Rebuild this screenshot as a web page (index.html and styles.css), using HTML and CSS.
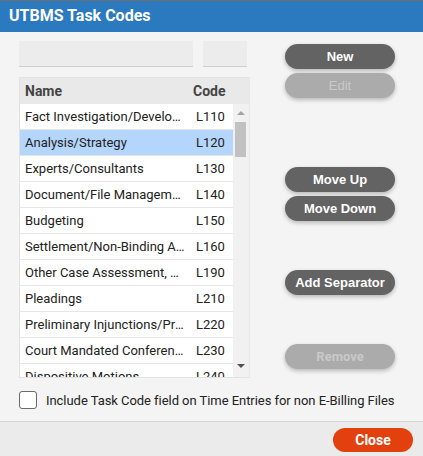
FILE: index.html
```html
<!DOCTYPE html>
<html lang="en">
<head>
  <meta charset="UTF-8" />
  <title>UTBMS Task Codes</title>
  <link rel="stylesheet" href="styles.css">
</head>
<body>
  <div class="dialog">
    <div class="title-bar">UTBMS Task Codes</div>

    <div class="content">
      <div class="left">
        <div class="filters">
          <div class="field field-name"></div>
          <div class="field field-code"></div>
        </div>

        <div class="grid">
          <div class="grid-head">
            <span class="col-name">Name</span>
            <span class="col-code">Code</span>
          </div>
          <div class="grid-body">
            <div class="rows">
              <div class="row"><span class="col-name">Fact Investigation/Development</span><span class="col-code">L110</span></div>
              <div class="row selected"><span class="col-name">Analysis/Strategy</span><span class="col-code">L120</span></div>
              <div class="row"><span class="col-name">Experts/Consultants</span><span class="col-code">L130</span></div>
              <div class="row"><span class="col-name">Document/File Management</span><span class="col-code">L140</span></div>
              <div class="row"><span class="col-name">Budgeting</span><span class="col-code">L150</span></div>
              <div class="row"><span class="col-name">Settlement/Non-Binding ADR</span><span class="col-code">L160</span></div>
              <div class="row"><span class="col-name">Other Case Assessment, Development</span><span class="col-code">L190</span></div>
              <div class="row"><span class="col-name">Pleadings</span><span class="col-code">L210</span></div>
              <div class="row"><span class="col-name">Preliminary Injunctions/Provisional</span><span class="col-code">L220</span></div>
              <div class="row"><span class="col-name">Court Mandated Conferences</span><span class="col-code">L230</span></div>
              <div class="row"><span class="col-name">Dispositive Motions</span><span class="col-code">L240</span></div>
            </div>
            <div class="scrollbar">
              <span class="arrow up"></span>
              <span class="thumb"></span>
              <span class="arrow down"></span>
            </div>
          </div>
        </div>
      </div>

      <div class="actions">
        <button class="btn btn-new">New</button>
        <button class="btn btn-edit" disabled>Edit</button>
        <button class="btn btn-up">Move Up</button>
        <button class="btn btn-down">Move Down</button>
        <button class="btn btn-sep">Add Separator</button>
        <button class="btn btn-remove" disabled>Remove</button>
      </div>
    </div>

    <label class="option">
      <span class="checkbox"></span>
      Include Task Code field on Time Entries for non E-Billing Files
    </label>

    <div class="footer">
      <button class="btn-close">Close</button>
    </div>
  </div>
</body>
</html>
```

FILE: styles.css
```css
body {
  margin: 0;
  font-family: Roboto, "Liberation Sans", Arial, sans-serif;
  background-color: #f4f4f4;
  color: #222;
}

.dialog {
  width: 423px;
  height: 456px;
  display: flex;
  flex-direction: column;
  overflow: hidden;
}

/* Title bar */
.title-bar {
  height: 31px;
  border-top: 1px solid #6e6e6e;
  background-color: #2b79bf;
  color: #fff;
  font-size: 16px;
  font-weight: bold;
  line-height: 30px;
  padding-left: 9px;
}

.content {
  display: flex;
  height: 346px;
}

.left {
  width: 231px;
  padding-left: 19px;
}

/* Filter fields */
.filters {
  display: flex;
  gap: 10px;
  margin-top: 9px;
}

.field {
  height: 25px;
  background-color: #ececec;
  border-bottom: 1px solid #cfcfcf;
}

.field-name {
  width: 174px;
}

.field-code {
  width: 44px;
}

/* Grid */
.grid {
  margin-top: 10px;
  border: 1px solid #e2e2e2;
  border-right-color: #e8e8e8;
  background-color: #f1f1f1;
}

.grid-head {
  display: flex;
  height: 26px;
  line-height: 26px;
  background-color: #e9e9e9;
  font-weight: bold;
  font-size: 14px;
  color: #444;
}

.col-name {
  padding-left: 5px;
  white-space: nowrap;
  overflow: hidden;
  text-overflow: ellipsis;
}

.grid-head .col-name {
  width: 162px;
  padding-right: 6px;
}

.grid-body {
  display: flex;
  height: 273px;
  overflow: hidden;
}

.rows {
  width: 214px;
}

.row {
  display: flex;
  height: 25px;
  line-height: 25px;
  background-color: #fff;
  border-bottom: 1px solid #e6e6e6;
  font-size: 13px;
}

.row.selected {
  background-color: #b4d5fc;
}

.row .col-name {
  width: 160px;
  padding-right: 11px;
}

.col-code {
  flex: 1;
}

/* Scrollbar */
.scrollbar {
  width: 16px;
  position: relative;
  background-color: #f1f1f1;
}

.thumb {
  position: absolute;
  left: 2px;
  top: 18px;
  width: 11px;
  height: 35px;
  background-color: #c1c1c1;
}

.arrow {
  position: absolute;
  left: 4px;
  width: 0;
  height: 0;
  border-left: 4px solid transparent;
  border-right: 4px solid transparent;
}

.arrow.up {
  top: 7px;
  border-bottom: 4px solid #a3a3a3;
}

.arrow.down {
  bottom: 9px;
  border-top: 4px solid #505050;
}

/* Action buttons */
.actions {
  display: flex;
  flex-direction: column;
  margin-left: 35px;
  padding-top: 12px;
}

.btn {
  width: 110px;
  height: 25px;
  border: none;
  border-radius: 13px;
  background-color: #636363;
  color: #fff;
  font-family: "Liberation Sans", Arial, sans-serif;
  font-weight: bold;
  font-size: 13px;
  padding: 0;
  box-shadow: 0 2px 4px rgba(0, 0, 0, 0.25);
}

.btn:disabled {
  background-color: #ababab;
  color: #c9c9c9;
}

.btn-edit {
  margin-top: 4px;
  font-weight: normal;
}

.btn-up {
  margin-top: 69px;
}

.btn-down {
  margin-top: 4px;
}

.btn-sep {
  margin-top: 49px;
}

.btn-remove {
  margin-top: 49px;
  font-family: Roboto, sans-serif;
}

/* Checkbox option */
.option {
  display: flex;
  align-items: center;
  gap: 9px;
  margin: 13px 0 0 19px;
  font-size: 13px;
  letter-spacing: -0.05px;
  color: #222;
}

.checkbox {
  width: 16px;
  height: 16px;
  border: 1px solid #6a6a6a;
  border-radius: 3px;
  background-color: #fff;
}

/* Footer */
.footer {
  margin-top: 12px;
  flex: 1;
  display: flex;
  justify-content: flex-end;
  align-items: flex-start;
  border-top: 1px solid #d4d4d4;
  background-color: #ebebeb;
  padding: 6px 10px 0 0;
}

.btn-close {
  width: 80px;
  height: 24px;
  border: none;
  border-radius: 12px;
  background-color: #e2400c;
  color: #fff;
  font-family: Roboto, sans-serif;
  font-weight: bold;
  font-size: 14px;
  padding: 0;
}
```
